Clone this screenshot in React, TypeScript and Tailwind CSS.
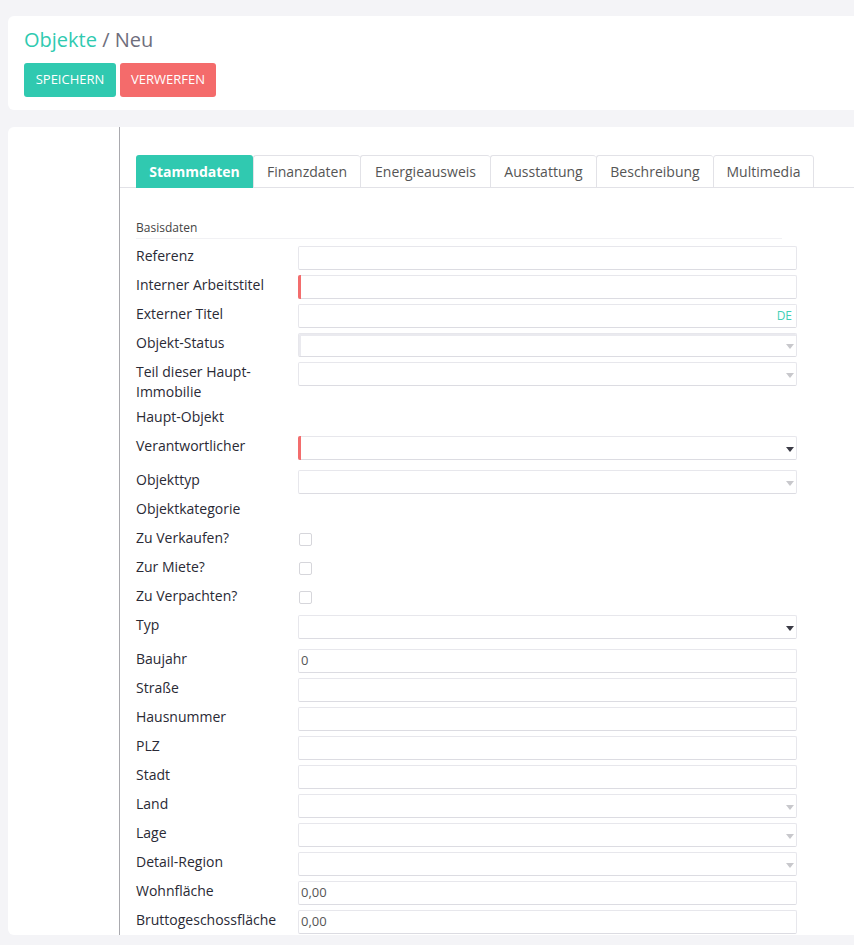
import React from 'react';

type Field = {
  label: string;
  kind: 'text' | 'select' | 'selectDark' | 'check' | 'none';
  required?: boolean;
  value?: string;
  lang?: boolean;
  inset?: boolean;
};

const fields: Field[] = [
  { label: 'Referenz', kind: 'text' },
  { label: 'Interner Arbeitstitel', kind: 'text', required: true },
  { label: 'Externer Titel', kind: 'text', lang: true },
  { label: 'Objekt-Status', kind: 'select', inset: true },
  { label: 'Teil dieser Haupt-Immobilie', kind: 'select' },
  { label: 'Haupt-Objekt', kind: 'none' },
  { label: 'Verantwortlicher', kind: 'selectDark', required: true },
  { label: 'Objekttyp', kind: 'select' },
  { label: 'Objektkategorie', kind: 'none' },
  { label: 'Zu Verkaufen?', kind: 'check' },
  { label: 'Zur Miete?', kind: 'check' },
  { label: 'Zu Verpachten?', kind: 'check' },
  { label: 'Typ', kind: 'selectDark' },
  { label: 'Baujahr', kind: 'text', value: '0' },
  { label: 'Straße', kind: 'text' },
  { label: 'Hausnummer', kind: 'text' },
  { label: 'PLZ', kind: 'text' },
  { label: 'Stadt', kind: 'text' },
  { label: 'Land', kind: 'select' },
  { label: 'Lage', kind: 'select' },
  { label: 'Detail-Region', kind: 'select' },
  { label: 'Wohnfläche', kind: 'text', value: '0,00' },
  { label: 'Bruttogeschossfläche', kind: 'text', value: '0,00' },
];

const tabs = [
  { name: 'Stammdaten', w: 'w-[117px]', active: true },
  { name: 'Finanzdaten', w: 'w-[107px]' },
  { name: 'Energieausweis', w: 'w-[130px]' },
  { name: 'Ausstattung', w: 'w-[106px]' },
  { name: 'Beschreibung', w: 'w-[117px]' },
  { name: 'Multimedia', w: 'w-[101px]', last: true },
];

function Arrow({ dark }: { dark?: boolean }) {
  return (
    <svg width="8" height="5" viewBox="0 0 8 5" className="absolute right-[2px] top-[10px]">
      <path d="M0 0h8L4 5z" fill={dark ? '#3b3b45' : '#c8c8cc'} />
    </svg>
  );
}

function Control({ f }: { f: Field }) {
  if (f.kind === 'none') return <div />;
  if (f.kind === 'check') {
    return (
      <div className="pt-[5px] pl-[1px]">
        <div className="w-[13px] h-[13px] border border-[#d6d6db] rounded-[2px] bg-white" />
      </div>
    );
  }
  return (
    <div
      className={`relative h-[24px] rounded-[2px] border border-[#e7e7ec] border-b-[#dcdce2] bg-white flex items-center text-[13px] text-[#555] pl-[2px] ${
        f.inset ? 'shadow-[inset_1px_1px_0_1px_#eaeaef]' : ''
      }`}
    >
      {f.required && <div className="absolute -left-px -top-px -bottom-px w-[3px] rounded-l-[2px] bg-[#f36d6d]" />}
      {f.value && <span>{f.value}</span>}
      {f.lang && (
        <span className="absolute right-0 top-0 bottom-0 pl-[11px] pr-[4px] bg-white flex items-center text-[12px] text-[#3fd0b6]">
          DE
        </span>
      )}
      {(f.kind === 'select' || f.kind === 'selectDark') && <Arrow dark={f.kind === 'selectDark'} />}
    </div>
  );
}

export default function App() {
  return (
    <div
      className="min-h-[945px] bg-[#f4f4f7] pt-4 pl-2 pb-[10px]"
      style={{ fontFamily: '"Open Sans", "Noto Sans", sans-serif' }}
    >
      <div className="bg-white rounded-l-[6px] h-[94px] px-4 pt-[10px]">
        <div className="text-[20px] leading-[28px]">
          <span className="text-[#2fcab0]">Objekte</span>
          <span className="text-[#6e6e7c]"> / Neu</span>
        </div>
        <div className="mt-[9px] flex gap-1">
          <button className="h-[34px] w-[92px] rounded-[3px] bg-[#30c9b0] text-white text-[13px] font-medium">
            SPEICHERN
          </button>
          <button className="h-[34px] w-[96px] rounded-[3px] bg-[#f46b6b] text-white text-[13px] font-medium">
            VERWERFEN
          </button>
        </div>
      </div>

      <div className="mt-[17px] bg-white rounded-l-[6px] h-[808px] flex overflow-hidden">
        <div className="w-[112px] border-r border-[#a9a9ae]" />
        <div className="flex-1 pt-[28px]">
          <div className="flex pl-4 border-b border-[#e2e2e7]">
            {tabs.map((t) => (
              <div
                key={t.name}
                className={`${t.w} h-[33px] -mb-px flex items-center justify-center text-[14px] rounded-t-[3px] ${
                  t.active
                    ? 'bg-[#30c9b0] text-white font-bold'
                    : `border-t border-l border-b border-[#e2e2e7] text-[#555] ${t.last ? 'border-r' : ''}`
                }`}
              >
                {t.name}
              </div>
            ))}
          </div>

          <div className="px-4 pt-[32px]">
            <div className="w-[646px] border-b border-[#f1f1f4] pb-[2px] text-[12px] leading-[16px] font-medium text-[#444]">
              Basisdaten
            </div>
            <div className="mt-[7px]">
              {fields.map((f) => (
                <div
                  key={f.label}
                  className={`grid grid-cols-[162px_499px] min-h-[24px] ${f.kind === 'selectDark' ? 'mb-[10px]' : 'mb-[5px]'}`}
                >
                  <div className="text-[14px] leading-[20px] font-medium text-[#2a2a35] pr-3">{f.label}</div>
                  <Control f={f} />
                </div>
              ))}
            </div>
          </div>
        </div>
      </div>
    </div>
  );
}
